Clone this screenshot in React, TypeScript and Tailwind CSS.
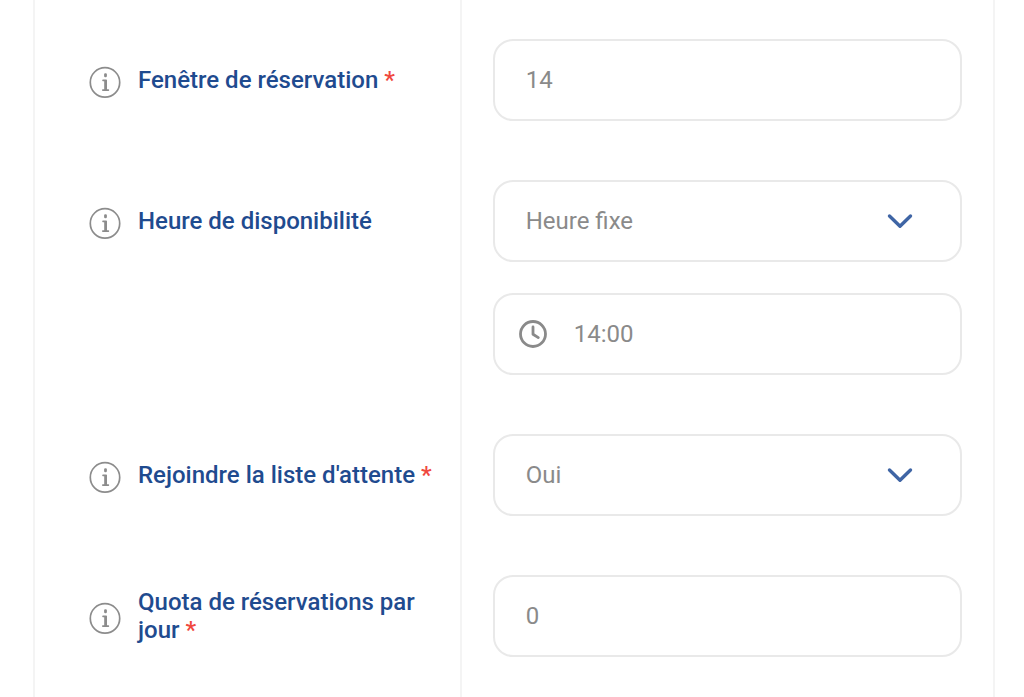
import * as React from 'react'
import { clsx } from 'clsx'

// ── Styles ────────────────────────────────────────────────────────────────────
const control = clsx(
  'block w-full h-[82px] rounded-[20px] border-2 border-[#e9e9e9] bg-white',
  'pl-[31px] pr-8 text-2xl font-normal text-[#8a8a8a]',
  'outline-none focus:border-[#1f4b8f]'
)

// ── Icons ─────────────────────────────────────────────────────────────────────
function InfoIcon() {
  return (
    <svg viewBox="0 0 32 32" className="mt-1 size-8 shrink-0" fill="none" aria-hidden="true">
      <circle cx="16" cy="16.4" r="14.7" stroke="#8c8c8c" strokeWidth="1.7" />
      <rect x="15.1" y="7.2" width="2.8" height="4" rx="1.2" fill="#8c8c8c" />
      <path
        d="M14 13.4H17.2Q18 13.4 18 14.2V23.2H19.4Q20.2 23.2 20.2 24.1T19.4 25H13.8Q13 25 13 24.1T13.8 23.2H15.2V15.2H14Q13.2 15.2 13.2 14.3T14 13.4Z"
        fill="#8c8c8c"
      />
    </svg>
  )
}

function ClockIcon() {
  return (
    <svg viewBox="0 0 28 28" className="size-7" fill="none" stroke="#8a8a8a" aria-hidden="true">
      <circle cx="14" cy="14" r="12.5" strokeWidth="2.8" />
      <path d="M14 7V14.2L19.3 17.6" strokeWidth="2.8" strokeLinecap="round" strokeLinejoin="round" />
    </svg>
  )
}

function ChevronIcon() {
  return (
    <svg viewBox="0 0 26 16" className="h-4 w-[26px]" fill="none" aria-hidden="true">
      <path d="M2.5 3L13 13.2L23.5 3" stroke="#3f65a5" strokeWidth="3.4" strokeLinecap="round" strokeLinejoin="round" />
    </svg>
  )
}

// ── Row ───────────────────────────────────────────────────────────────────────
interface RowProps {
  id:        string
  label:     string
  required?: boolean
  children:  React.ReactNode
}

function Row({ id, label, required, children }: RowProps) {
  return (
    <div className="grid grid-cols-[43fr_54fr] last:grow">
      <div className="pt-[39px] pb-5 pl-[54px] pr-3">
        <div className="flex h-[82px] items-center gap-[17px]">
          <InfoIcon />
          <label htmlFor={id} className="text-2xl leading-7 font-medium text-[#1f4b8f]">
            {label}{' '}
            {required && <span className="text-[#f0483e]">*</span>}
          </label>
        </div>
      </div>
      <div className="flex flex-col gap-[31px] border-l-2 border-[#f4f4f4] pt-[39px] pb-5 pl-[31px] pr-[31px]">
        {children}
      </div>
    </div>
  )
}

// ── Select ────────────────────────────────────────────────────────────────────
function Select({ id, options }: { id: string; options: string[] }) {
  return (
    <div className="relative">
      <select id={id} defaultValue={options[0]} className={clsx(control, 'appearance-none')}>
        {options.map(option => (
          <option key={option}>{option}</option>
        ))}
      </select>
      <span className="pointer-events-none absolute inset-y-0 right-[49px] flex items-center">
        <ChevronIcon />
      </span>
    </div>
  )
}

// ── App ───────────────────────────────────────────────────────────────────────
export default function App() {
  return (
    <main className="min-h-screen bg-white pl-[33px] pr-[29px] font-['Roboto',sans-serif]">
      <form className="flex min-h-screen flex-col border-x-2 border-[#f4f4f4]">
        <Row id="window" label="Fenêtre de réservation" required>
          <input id="window" type="text" inputMode="numeric" defaultValue="14" className={control} />
        </Row>

        <Row id="availability" label="Heure de disponibilité">
          <Select id="availability" options={['Heure fixe']} />
          <div className="relative">
            <input
              type="text"
              aria-label="Heure"
              defaultValue="14:00"
              className={clsx(control, 'pl-[79px]')}
            />
            <span className="pointer-events-none absolute inset-y-0 left-[26px] flex items-center">
              <ClockIcon />
            </span>
          </div>
        </Row>

        <Row id="waitlist" label="Rejoindre la liste d'attente" required>
          <Select id="waitlist" options={['Oui', 'Non']} />
        </Row>

        <Row id="quota" label="Quota de réservations par jour" required>
          <input id="quota" type="text" inputMode="numeric" defaultValue="0" className={control} />
        </Row>
      </form>
    </main>
  )
}
